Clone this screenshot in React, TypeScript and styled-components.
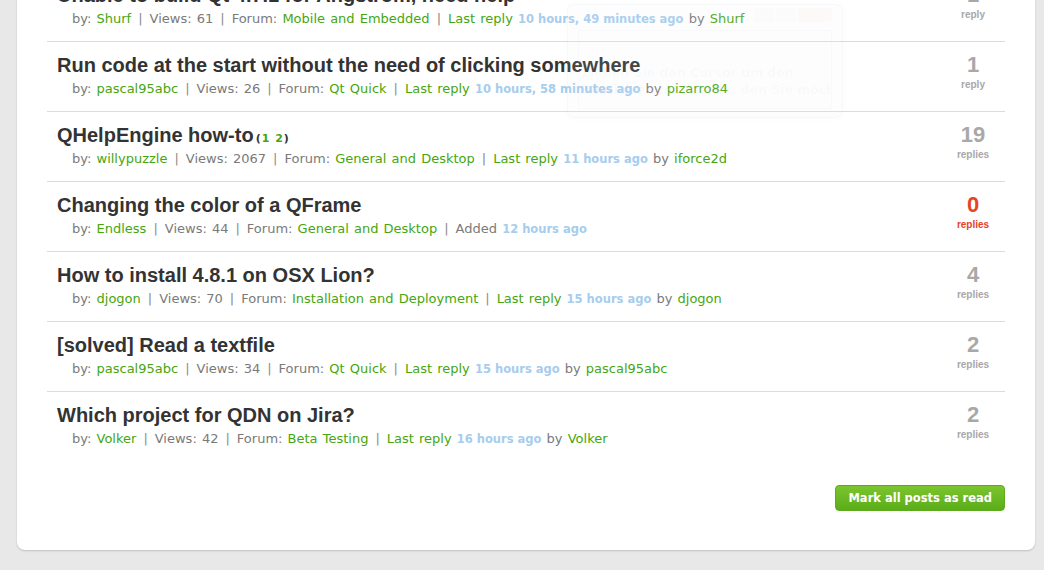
import React from "react";
import styled, { createGlobalStyle } from "styled-components";

const GlobalStyle = createGlobalStyle`
  html, body { margin: 0; padding: 0; background: #e8e8e8; overflow: hidden; }
  body { font-family: "DejaVu Sans", Verdana, sans-serif; }
`;

const Page = styled.div`
  display: flow-root;
  min-height: 570px;
  background: #e8e8e8;
  padding: 0 0 20px 17px;
  box-sizing: border-box;
  position: relative;
`;

const Card = styled.div`
  width: 1018px;
  margin-top: -28px;
  background: #fff;
  border-radius: 0 0 8px 8px;
  box-shadow: 0 1px 2px rgba(0, 0, 0, 0.18);
  padding: 0 30px 39px;
  box-sizing: border-box;
`;

const List = styled.div`
  display: flex;
  flex-direction: column;
`;

const Row = styled.div<{ $last?: boolean }>`
  display: flex;
  align-items: flex-start;
  padding: 11px 0 13px 10px;
  border-bottom: ${(p) => (p.$last ? "none" : "1px solid #dcdcdc")};
`;

const Main = styled.div`
  flex: 1;
  min-width: 0;
`;

const Title = styled.div`
  font-family: "Liberation Sans", Arial, sans-serif;
  font-weight: bold;
  font-size: 20px;
  line-height: 24px;
  height: 24px;
  color: #333;
  white-space: nowrap;
`;

const Pages = styled.span`
  font-family: "DejaVu Sans", Verdana, sans-serif;
  font-size: 11px;
  line-height: 1;
  font-weight: bold;
  color: #333;
  margin-left: 2px;
  letter-spacing: 1px;
`;

const PageNum = styled.span`
  color: #46a60e;
`;

const Meta = styled.div`
  margin-top: 3px;
  padding-left: 15px;
  font-size: 13px;
  line-height: 18px;
  height: 18px;
  word-spacing: 1px;
  color: #7a7a7a;
  white-space: nowrap;
`;

const Link = styled.span`
  color: #46a60e;
`;

const Sep = styled.span`
  color: #8a8a8a;
  margin: 0 7px;
`;

const Time = styled.span`
  color: #a6cdee;
  font-weight: bold;
  font-size: 11.5px;
  word-spacing: 0;
`;

const Count = styled.div<{ $zero?: boolean }>`
  width: 64px;
  margin-top: 1px;
  display: flex;
  flex-direction: column;
  align-items: center;
  font-family: "Liberation Sans", Arial, sans-serif;
  font-weight: bold;
  color: ${(p) => (p.$zero ? "#e64427" : "#a8a8a8")};
`;

const CountNum = styled.div`
  font-size: 22px;
  line-height: 22px;
`;

const CountLabel = styled.div`
  margin-top: 3px;
  font-size: 10px;
  line-height: 12px;
`;

const Footer = styled.div`
  display: flex;
  justify-content: flex-end;
  margin-top: 24px;
`;

const Button = styled.button`
  height: 26px;
  padding: 0 12px;
  border: 1px solid #5cab1c;
  border-radius: 4px;
  background: linear-gradient(#7cc52e, #5aad19);
  color: #fff;
  font-family: "DejaVu Sans", Verdana, sans-serif;
  font-weight: bold;
  font-size: 11.5px;
  cursor: pointer;
`;

const Ghost = styled.div`
  position: absolute;
  left: 567px;
  top: 4px;
  width: 276px;
  height: 114px;
  box-sizing: border-box;
  border-radius: 7px;
  background: rgba(235, 238, 245, 0.1);
  box-shadow: 0 0 10px rgba(0, 0, 0, 0.02);
  border: 1px solid rgba(200, 205, 215, 0.1);
  pointer-events: none;
  display: flex;
  flex-direction: column;
  padding: 3px 10px 8px;
`;

const GhostBar = styled.div`
  height: 22px;
  display: flex;
  justify-content: flex-end;
  align-items: flex-start;
  gap: 2px;
`;

const GhostBtn = styled.div<{ $close?: boolean }>`
  width: ${(p) => (p.$close ? 34 : 20)}px;
  height: 14px;
  border-radius: 3px;
  background: ${(p) => (p.$close ? "rgba(230, 150, 100, 0.04)" : "rgba(180, 185, 195, 0.03)")};
`;

const GhostInner = styled.div`
  flex: 1;
  border: 1px solid rgba(200, 205, 215, 0.08);
  padding: 33px 0 0 2px;
  font-family: "DejaVu Sans", Verdana, sans-serif;
  font-weight: bold;
  font-size: 12.5px;
  line-height: 17px;
  color: rgba(120, 125, 135, 0.04);
  white-space: nowrap;
  overflow: hidden;
`;

type Topic = {
  title: string;
  pages?: number[];
  by: string;
  views: number;
  forum: string;
  time: string;
  last?: string;
  count: number;
};

const topics: Topic[] = [
  {
    title: "Unable to build Qt 4.7.1 for Angstrom, need help",
    by: "Shurf",
    views: 61,
    forum: "Mobile and Embedded",
    time: "10 hours, 49 minutes ago",
    last: "Shurf",
    count: 1,
  },
  {
    title: "Run code at the start without the need of clicking somewhere",
    by: "pascal95abc",
    views: 26,
    forum: "Qt Quick",
    time: "10 hours, 58 minutes ago",
    last: "pizarro84",
    count: 1,
  },
  {
    title: "QHelpEngine how-to",
    pages: [1, 2],
    by: "willypuzzle",
    views: 2067,
    forum: "General and Desktop",
    time: "11 hours ago",
    last: "iforce2d",
    count: 19,
  },
  {
    title: "Changing the color of a QFrame",
    by: "Endless",
    views: 44,
    forum: "General and Desktop",
    time: "12 hours ago",
    count: 0,
  },
  {
    title: "How to install 4.8.1 on OSX Lion?",
    by: "djogon",
    views: 70,
    forum: "Installation and Deployment",
    time: "15 hours ago",
    last: "djogon",
    count: 4,
  },
  {
    title: "[solved] Read a textfile",
    by: "pascal95abc",
    views: 34,
    forum: "Qt Quick",
    time: "15 hours ago",
    last: "pascal95abc",
    count: 2,
  },
  {
    title: "Which project for QDN on Jira?",
    by: "Volker",
    views: 42,
    forum: "Beta Testing",
    time: "16 hours ago",
    last: "Volker",
    count: 2,
  },
];

export default function App() {
  return (
    <>
      <GlobalStyle />
      <Page>
        <Card>
          <List>
            {topics.map((t, i) => (
              <Row key={i} $last={i === topics.length - 1}>
                <Main>
                  <Title>
                    {t.title}
                    {t.pages && (
                      <Pages>
                        (<PageNum>{t.pages.join(" ")}</PageNum>)
                      </Pages>
                    )}
                  </Title>
                  <Meta>
                    by: <Link>{t.by}</Link>
                    <Sep>|</Sep>Views: {t.views}
                    <Sep>|</Sep>Forum: <Link>{t.forum}</Link>
                    <Sep>|</Sep>
                    {t.last ? (
                      <>
                        <Link>Last reply</Link> <Time>{t.time}</Time> by <Link>{t.last}</Link>
                      </>
                    ) : (
                      <>
                        Added <Time>{t.time}</Time>
                      </>
                    )}
                  </Meta>
                </Main>
                <Count $zero={t.count === 0}>
                  <CountNum>{t.count}</CountNum>
                  <CountLabel>{t.count === 1 ? "reply" : "replies"}</CountLabel>
                </Count>
              </Row>
            ))}
          </List>
          <Footer>
            <Button>Mark all posts as read</Button>
          </Footer>
        </Card>
        <Ghost>
          <GhostBar>
            <GhostBtn />
            <GhostBtn />
            <GhostBtn $close />
          </GhostBar>
          <GhostInner>
            Ziehen Sie den Cursor um den
            <br />
            Bereich zu markieren, den Sie möchten, ch.
          </GhostInner>
        </Ghost>
      </Page>
    </>
  );
}
